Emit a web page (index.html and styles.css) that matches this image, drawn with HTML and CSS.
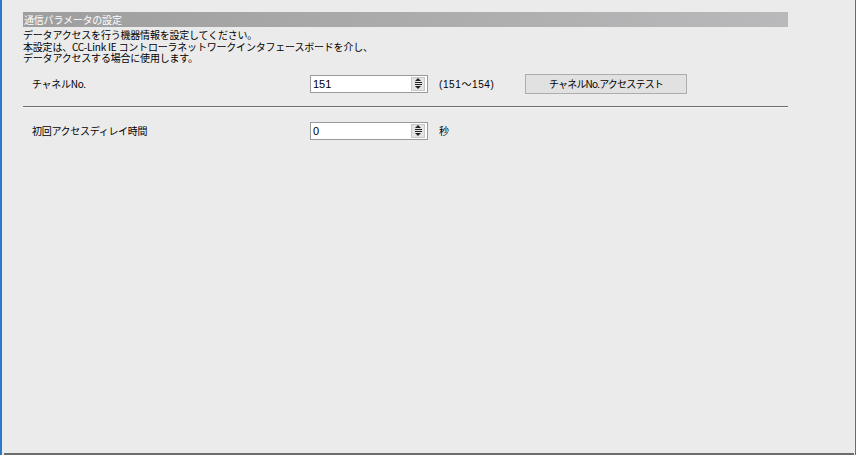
FILE: index.html
```html
<!DOCTYPE html>
<html lang="ja">
<head>
<meta charset="utf-8">
<link rel="stylesheet" href="styles.css">
</head>
<body>
<div class="frame">
  <div class="panel">
    <div class="section-title">通信パラメータの設定</div>
    <div class="desc">
      <div>データアクセスを行う機器情報を設定してください。</div>
      <div>本設定は、CC-Link IE コントローラネットワークインタフェースボードを介し、</div>
      <div>データアクセスする場合に使用します。</div>
    </div>
    <div class="row row-channel">
      <div class="label">チャネルNo.</div>
      <div class="spin">
        <div class="spin-value">151</div>
        <div class="spin-btns">
          <div class="spin-btn up"><span class="tri-up"></span><span class="bar"></span></div>
          <div class="spin-btn down"><span class="bar"></span><span class="tri-down"></span></div>
        </div>
      </div>
      <div class="note">(151～154)</div>
      <div class="button">チャネルNo.アクセステスト</div>
    </div>
    <div class="sep"></div>
    <div class="row row-delay">
      <div class="label">初回アクセスディレイ時間</div>
      <div class="spin">
        <div class="spin-value">0</div>
        <div class="spin-btns">
          <div class="spin-btn up"><span class="tri-up"></span><span class="bar"></span></div>
          <div class="spin-btn down"><span class="bar"></span><span class="tri-down"></span></div>
        </div>
      </div>
      <div class="note unit">秒</div>
    </div>
  </div>
  <div class="bottom-line"></div>
</div>
</body>
</html>
```
FILE: styles.css
```css
* { box-sizing: border-box; }
html, body {
  margin: 0;
  padding: 0;
  width: 856px;
  height: 455px;
  overflow: hidden;
  background: #ebebeb;
}
body {
  font-family: "Noto Sans CJK JP", "Noto Sans", sans-serif;
  font-size: 10px;
  color: #000;
}
.frame {
  width: 856px;
  height: 455px;
  border-left: 2px solid #2a7bc6;
  border-right: 1px solid #2a7bc6;
  display: flex;
  flex-direction: column;
  justify-content: space-between;
}
.panel {
  width: 786px;
  padding: 12px 0 0 21px;
}
.section-title {
  height: 15px;
  line-height: 15px;
  padding-left: 1px;
  color: #fff;
  background: linear-gradient(to right, #9e9e9e, #b9b9bb);
  font-size: 10px;
  letter-spacing: -0.2px;
}
.desc {
  padding-top: 2px;
  line-height: 11.5px;
  letter-spacing: -0.2px;
}
.row {
  display: flex;
  align-items: center;
  height: 20px;
}
.row-channel { margin-top: 10px; }
.row-delay { margin-top: 13px; }
.label {
  width: 287px;
  padding-left: 9px;
  letter-spacing: -0.3px;
}
.spin {
  width: 118px;
  height: 18px;
  border: 1px solid #9a9a9a;
  background: #fff;
  display: flex;
  align-items: stretch;
  padding: 1px 1px 1px 0;
}
.spin-value {
  flex: 1;
  padding-left: 2px;
  line-height: 14px;
  font-family: "Liberation Sans", sans-serif;
  font-size: 11px;
}
.spin-btns {
  width: 14px;
  display: flex;
  flex-direction: column;
  background: #e4e4e4;
  border: 1px solid #c8c8c8;
  margin-right: 1px;
}
.spin-btn {
  flex: 1;
  display: flex;
  flex-direction: column;
  align-items: center;
  justify-content: center;
  gap: 1px;
}
.tri-up {
  width: 0; height: 0;
  border-left: 3px solid transparent;
  border-right: 3px solid transparent;
  border-bottom: 3px solid #222;
}
.tri-down {
  width: 0; height: 0;
  border-left: 3px solid transparent;
  border-right: 3px solid transparent;
  border-top: 3px solid #222;
}
.bar {
  width: 7px;
  height: 1px;
  background: #222;
}
.note {
  margin-left: 11px;
  width: 86px;
  font-family: "Liberation Sans", "Noto Sans CJK JP", sans-serif;
  font-size: 10px;
  letter-spacing: 0.6px;
}
.unit { font-family: "Noto Sans CJK JP", sans-serif; letter-spacing: 0; }
.button {
  width: 162px;
  height: 20px;
  border: 1px solid #adadad;
  background: #e1e1e1;
  display: flex;
  align-items: center;
  justify-content: center;
  letter-spacing: -0.8px;
}
.sep {
  margin-top: 12px;
  height: 2px;
  border-top: 1px solid #6e6e6e;
  border-bottom: 1px solid #f6f6f6;
}
.bottom-line {
  margin: 0 1px 0 2px;
  height: 2px;
  background: #6d6d6d;
}
```
